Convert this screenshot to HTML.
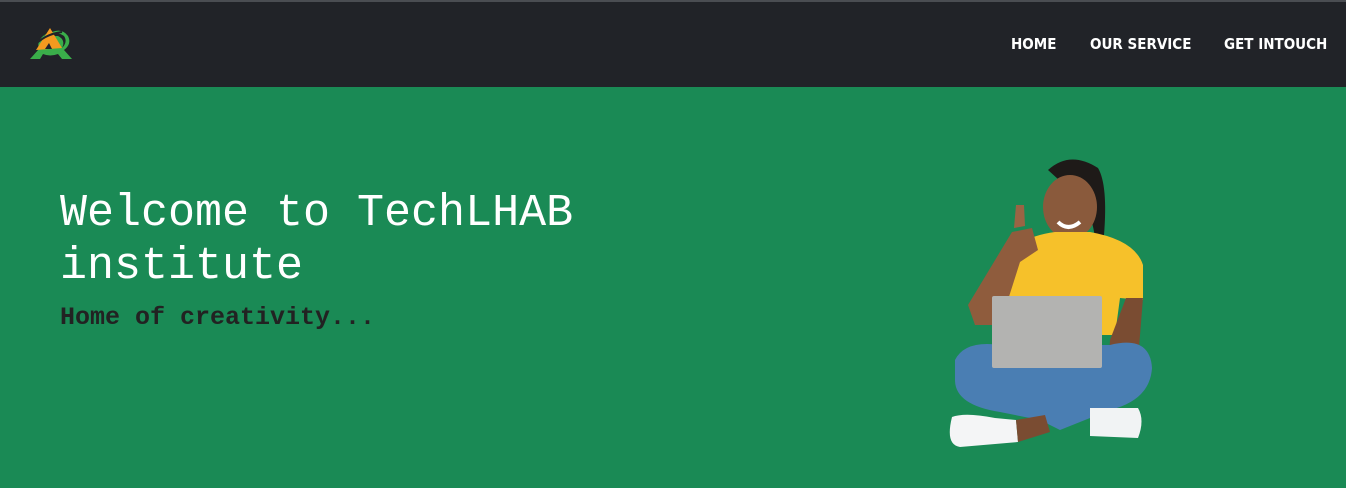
<!DOCTYPE html>
<html><head><meta charset="utf-8"><style>
*{margin:0;padding:0;box-sizing:border-box}
body{width:1346px;height:488px;overflow:hidden;background:#1a8a55;font-family:"Liberation Sans",sans-serif}
.nav{position:absolute;left:0;top:0;width:1346px;height:87px;background:#212328;border-top:2px solid #4a4d52}
.nav a{position:absolute;top:33px;color:#fff;font-family:"DejaVu Sans Condensed","DejaVu Sans",sans-serif;font-size:15px;font-weight:600;text-decoration:none}
h1{position:absolute;left:60px;top:187px;font-family:"Courier New","Liberation Mono",monospace;font-weight:normal;font-size:45px;line-height:53px;color:#fff}
h2{position:absolute;left:60px;top:303px;font-family:"Courier New","Liberation Mono",monospace;font-weight:bold;font-size:25px;color:#222}
svg{position:absolute}
</style></head><body>
<div class="nav">
<svg style="left:26px;top:20px" width="50" height="40" viewBox="0 0 50 40">
<path d="M4 37 L13 27 Q10 18 20 12 L26 10 Q36 6 42 14 Q46 22 38 28 L46 37 L36 37 L32 32 Q24 35 17 32 L14 37 Z" fill="#3aae4a"/>
<path d="M18 14 Q30 8 38 14 Q42 20 36 26 Q40 18 32 14 Z" fill="#212328"/>
<path d="M10 28 L24 6 L36 26 Z" fill="#f39a1f"/>
<path d="M6 26 Q18 12 36 10" stroke="#212328" stroke-width="2" fill="none"/>
<path d="M19 27 L23 21 L26 27 Z" fill="#212328"/>
</svg>
<a style="left:1011px">HOME</a>
<a style="left:1090px">OUR SERVICE</a>
<a style="left:1224px">GET INTOUCH</a>
</div>
<h1>Welcome to TechLHAB<br>institute</h1>
<h2>Home of creativity...</h2>
<svg style="left:930px;top:150px" width="240" height="310" viewBox="930 150 240 310">
<path d="M1048 170 Q1070 150 1098 168 Q1108 185 1104 235 L1095 238 Q1090 200 1070 190 Z" fill="#1e1a18"/>
<ellipse cx="1070" cy="207" rx="27" ry="32" fill="#8a5a3c"/>
<path d="M1058 222 Q1068 232 1080 222" stroke="#fff" stroke-width="4" fill="none"/>
<path d="M1008 250 Q1030 235 1055 232 L1090 232 Q1135 240 1143 265 L1143 300 L1120 298 L1115 335 L1000 335 L1008 290 L1000 280 Z" fill="#f6c12a"/>
<path d="M1126 298 L1143 298 L1138 360 L1108 370 L1110 340 Z" fill="#7a4c32"/>
<path d="M1012 232 L1032 228 L1038 250 L1020 262 L1000 325 L975 325 L968 305 Z" fill="#8f5c3d"/>
<path d="M1016 205 L1024 205 L1025 226 L1014 228 Z" fill="#9a6444"/>
<path d="M955 360 Q965 340 1000 345 L1110 345 Q1150 335 1152 368 Q1150 400 1110 410 L1060 430 L1040 420 L1000 412 Q955 405 955 380 Z" fill="#4a7eb3"/>
<rect x="992" y="296" width="110" height="72" rx="2" fill="#b3b3b1"/>
<path d="M1090 408 L1138 408 Q1145 420 1138 438 L1090 436 Z" fill="#f1f3f4"/>
<path d="M952 417 Q965 412 995 418 L1016 420 L1018 442 L960 447 Q945 445 952 417 Z" fill="#f4f5f6"/>
<path d="M1016 420 L1045 415 L1050 432 L1018 442 Z" fill="#7a4c32"/>
</svg>
</body></html>
